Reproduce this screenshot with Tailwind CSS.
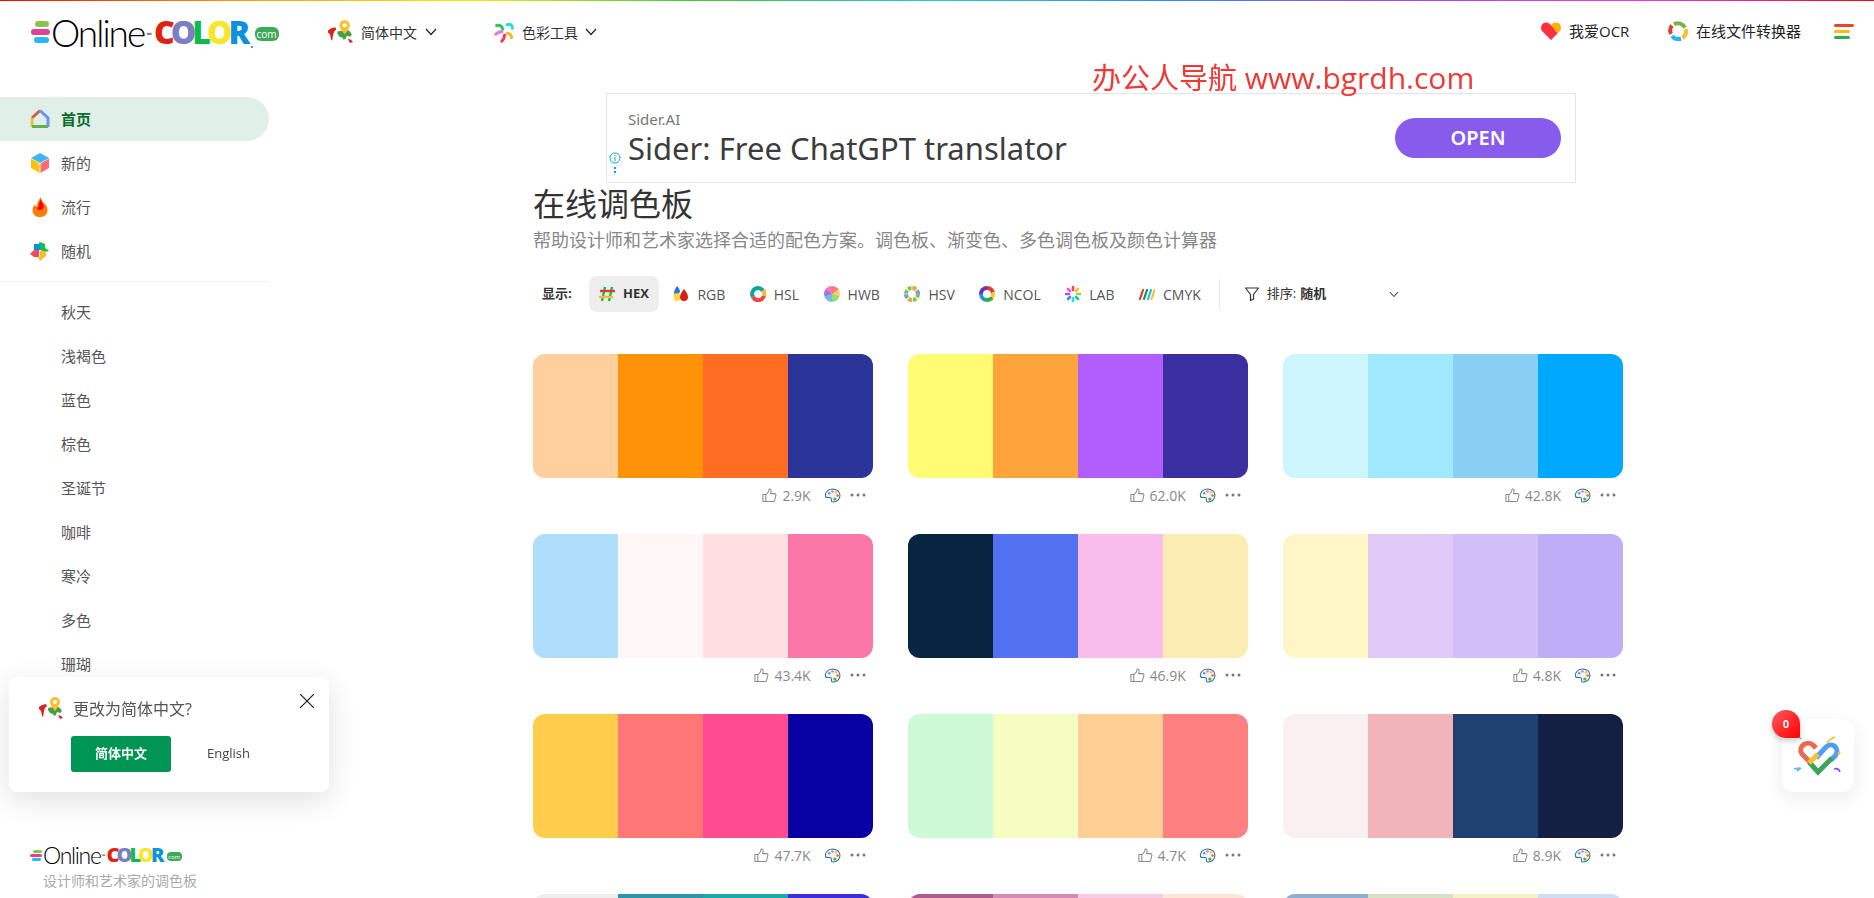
<!DOCTYPE html>
<html lang="zh-CN">
<head>
  <meta charset="UTF-8" />
  <meta name="viewport" content="width=device-width, initial-scale=1.0" />
  <title>在线调色板</title>
  <script src="https://cdn.jsdelivr.net/npm/@tailwindcss/browser@4"></script>
</head>
<body class="h-screen overflow-hidden bg-white text-[#555] font-['Open_Sans','Noto_Sans_CJK_SC',sans-serif]">
  <svg class="hidden" xmlns="http://www.w3.org/2000/svg">
    <symbol id="globe" viewBox="0 0 24 24">
      <path fill="#d9261c" d="M0 10l3-2 4-1 1 2-2 2-1 3-1 6-1-1-1-5-2-2zM19 18l3 1 2 2-3 1-1-2z"/>
      <path fill="#43a047" d="M9 11l5-1 2 1 2-2 3 2 2 3-2 2-3-1-1 3-2 1-1-2-3-1-2-3z"/>
      <path fill="#fbc02d" d="M16 0a5 5 0 0 1 5 5c0 3-3 6-5 9-2-3-5-6-5-9a5 5 0 0 1 5-5z"/>
      <circle cx="16" cy="5" r="2" fill="#fff"/>
    </symbol>
    <symbol id="thumb" viewBox="0 0 16 16">
      <path fill="none" stroke="#8a8a8a" stroke-width="1.100" stroke-linejoin="round" d="M1 7h3v7.500H1zM4 7.500l3-3.500.6-3c1.600-.3 2.400 1 2 3L9.200 6h4.300c1 0 1.600 1 1.300 1.900l-1.500 5.500c-.2.700-.8 1.100-1.500 1.100H6c-.8 0-1.300-.3-2-.6"/>
    </symbol>
    <symbol id="palette" viewBox="0 0 18 16">
      <path fill="#f4f4f4" stroke="#2c6e9e" stroke-width="1.100" d="M9 1c4.500 0 8 2.800 8 6.800 0 4.200-3.400 7.200-7 7.200-1.500 0-2.200-.8-2.200-1.800 0-1.400.6-2.400-.8-2.800C5 9.800 2.500 11 1.500 9.200.3 5.500 4 1 9 1z"/>
      <circle cx="5.500" cy="5.500" r="1.300" fill="#4aa3e8"/><circle cx="9" cy="3.600" r="1.300" fill="#f06bb0"/><circle cx="12.800" cy="4.600" r="1.300" fill="#f7c531"/><circle cx="14.500" cy="8" r="1.300" fill="#f0603c"/><circle cx="11.500" cy="11.800" r="1.800" fill="#57b947"/>
    </symbol>
    <symbol id="dots" viewBox="0 0 16 4">
      <circle cx="2" cy="2" r="1.500" fill="#777"/><circle cx="8" cy="2" r="1.500" fill="#777"/><circle cx="14" cy="2" r="1.500" fill="#777"/>
    </symbol>
    <symbol id="chev" viewBox="0 0 12 8">
      <path fill="none" stroke="#222" stroke-width="1.200" d="M1 1l5 5.500L11 1"/>
    </symbol>
  </svg>

  <div class="h-px bg-[linear-gradient(90deg,#f00,#f90,#ee0,#3c3,#2cc,#38f,#a4e,#f3d,#f01)]"></div>

  <header class="h-[62px] flex items-center text-[#333]">
    <a href="#" class="flex items-center w-[328px] pl-[31px]">
      <span class="flex flex-col gap-[2px] w-[19px] mr-px">
        <i class="block h-[6px] w-[14px] ml-[4px] rounded-full bg-[#8bc34a]"></i>
        <i class="block h-[6px] w-[19px] rounded-full bg-[#e0409a]"></i>
        <i class="block h-[6px] w-[15px] ml-[3px] rounded-full bg-[#29b6f6]"></i>
      </span>
      <span class="text-[37px] leading-none font-light text-black tracking-[-2px] font-['Lato',sans-serif]">Online</span>
      <span class="mx-[2px] text-[18px] font-bold text-[#888]">-</span>
      <span class="flex text-[32px] leading-none font-extrabold tracking-[-4px]">
        <span class="text-[#dd2412]">C</span><span class="text-[#7a7fc4]">O</span><span class="text-[#10bb4c]">L</span><span class="text-[#f7e72c]">O</span><span class="text-[#0c92dd]">R</span>
      </span>
      <span class="self-end mb-[1px] ml-[4px] text-[#0c92dd] font-bold text-[12px] leading-none">.</span>
      <span class="ml-px mt-[4px] w-[24px] h-[14px] flex items-center justify-center rounded-[6px] bg-[#3fa95a] text-white text-[10px] leading-none">com</span>
    </a>
    <button class="flex items-center w-[166px] text-[14px]">
      <svg class="w-[25px] h-[25px] mr-[8px]"><use href="#globe"/></svg>
      <span class="font-['Noto_Sans_CJK_SC',sans-serif]">简体中文</span>
      <svg class="w-[12px] h-[8px] ml-[8px]"><use href="#chev"/></svg>
    </button>
    <button class="flex items-center text-[14px]">
      <svg class="w-[21px] h-[21px] mr-[7px]" viewBox="0 0 24 24" fill="none" stroke-width="3.500" stroke-linecap="round">
        <path stroke="#1ecb5b" d="M3 4c3-1 6 0 7 4"/><path stroke="#32d6e8" d="M15 3c4-1 6 1 6 4"/><path stroke="#f7b731" d="M15 13c3 0 5 1 5 5"/><path stroke="#f36" d="M12 15c0 3-1 5-3 7"/><path stroke="#e874e0" d="M9 11c-3 0-5 1-7 3"/>
      </svg>
      <span class="font-['Noto_Sans_CJK_SC',sans-serif]">色彩工具</span>
      <svg class="w-[12px] h-[8px] ml-[7px]"><use href="#chev"/></svg>
    </button>
    <div class="ml-auto flex items-center pr-[20px] pb-[2px] text-[15px] text-[#222]">
      <svg class="w-[20px] h-[18px] mr-[8px]" viewBox="0 0 20 18">
        <path fill="#ff3040" d="M10 18L1.500 9.500C-.5 7.500-.4 3.800 1.500 1.900 3.500-.1 6.800-.1 8.800 1.900l1.200 1.300L14 8z"/>
        <path fill="#ffb300" d="M10 3.200l1.200-1.300c2-2 5.300-2 7.300 0 1.900 1.900 2 5.600 0 7.600l-2 2z"/>
        <path fill="#ff3040" d="M10 18l-4-8 4-6.800 6.500 8.300z"/>
      </svg>
      <span class="w-[61px] whitespace-nowrap">我爱OCR</span>
      <svg class="w-[20px] h-[20px] ml-[38px] mr-[8px]" viewBox="0 0 20 20" fill="none" stroke-width="4">
        <path stroke="#7cb342" d="M6 3.200a8 8 0 0 1 11 3.500"/><path stroke="#fbc02d" d="M17.500 8a8 8 0 0 1-3 9"/><path stroke="#29b6f6" d="M13 17.500a8 8 0 0 1-9-2.500"/><path stroke="#e53935" d="M3 13a8 8 0 0 1 1-8.500"/>
      </svg>
      <span class="w-[105px] whitespace-nowrap">在线文件转换器</span>
      <span class="ml-[33px] w-[20px] flex flex-col gap-[3px]">
        <i class="block h-[3px] w-[20px] rounded-full bg-[#ea4335]"></i>
        <i class="block h-[3px] w-[16px] rounded-full bg-[#fbbc05]"></i>
        <i class="block h-[3px] w-[16px] rounded-full bg-[#34a853]"></i>
      </span>
    </div>
  </header>

  <div class="flex h-[835px] overflow-hidden">
    <aside class="w-[269px] shrink-0 pt-[34px] flex flex-col text-[15px] leading-[44px]">
      <a href="#" class="flex items-center h-[44px] pl-[30px] rounded-r-full bg-[#e0f0e8] text-[#0d6b2e] font-bold">
        <svg class="w-[20px] h-[20px] mr-[11px]" viewBox="0 0 20 20" fill="none" stroke-width="3">
          <path stroke="#c9634a" d="M2 9l8-7.500"/><path stroke="#6d93f2" d="M10 1.500L18 9v9"/><path stroke="#e9c23f" d="M2 9v9"/><path stroke="#6aab55" d="M2 17.500h16"/>
        </svg>
        首页
      </a>
      <a href="#" class="flex items-center h-[44px] pl-[30px]">
        <svg class="w-[20px] h-[20px] mr-[11px]" viewBox="0 0 20 20">
          <path fill="#3db5f2" d="M10 0l9 5-9 5-9-5z"/><path fill="#ffc107" d="M1 5.500l8.500 5V20L1 15z"/><path fill="#ff6b70" d="M19 5.500l-8.500 5V20l8.500-5z"/>
        </svg>
        新的
      </a>
      <a href="#" class="flex items-center h-[44px] pl-[30px]">
        <svg class="w-[20px] h-[20px] mr-[11px]" viewBox="0 0 20 20">
          <path fill="#ff7a0a" d="M10 20c-4.500 0-7.500-3-7.500-6.800 0-2.500 1-4 2.500-5.700.4 1.500 1 2.200 2 2.500C6.800 6 8.500 3 11 0c0 3 1.500 4.500 3.500 6.500 2 2 3 4 3 6.700 0 3.800-3 6.800-7.500 6.800z"/>
          <path fill="#f00" d="M10 13c-2 0-3.200-1.300-3-3 .5.500 1 .7 1.500.7C8.300 8 9.500 5 11 2c.2 3 2.500 4.500 2.500 7.500 0 2-1.500 3.500-3.500 3.500z"/>
        </svg>
        流行
      </a>
      <a href="#" class="flex items-center h-[44px] pl-[30px]">
        <svg class="w-[20px] h-[20px] mr-[11px]" viewBox="0 0 20 20">
          <path fill="#0e90e0" d="M4 3h5l1-3 0 9-6 1z"/><path fill="#0cc14f" d="M10 1l5 2v4l4 2.500-3 1.500-6-2z"/><path fill="#f04b55" d="M4 9h5v7H4l-4-3z"/><path fill="#fdbb2d" d="M10 10h6v5l-6 5-2-4h2z"/>
        </svg>
        随机
      </a>
      <div class="my-[8px] h-px bg-[#eee]"></div>
      <a href="#" class="pl-[61px]">秋天</a>
      <a href="#" class="pl-[61px]">浅褐色</a>
      <a href="#" class="pl-[61px]">蓝色</a>
      <a href="#" class="pl-[61px]">棕色</a>
      <a href="#" class="pl-[61px]">圣诞节</a>
      <a href="#" class="pl-[61px]">咖啡</a>
      <a href="#" class="pl-[61px]">寒冷</a>
      <a href="#" class="pl-[61px]">多色</a>
      <a href="#" class="pl-[61px]">珊瑚</a>
      <div class="mt-auto pb-[7px] pl-[30px]">
        <div class="flex items-center h-[20px]">
          <span class="flex flex-col gap-px w-[12px] mr-px">
            <i class="block h-[3px] w-[9px] ml-[3px] rounded-full bg-[#8bc34a]"></i>
            <i class="block h-[3px] w-[12px] rounded-full bg-[#e0409a]"></i>
            <i class="block h-[3px] w-[9px] ml-[2px] rounded-full bg-[#29b6f6]"></i>
          </span>
          <span class="text-[23px] leading-none font-light text-black tracking-[-1.300px] font-['Lato',sans-serif]">Online</span>
          <span class="mx-px text-[12px] font-bold text-[#888] leading-none">-</span>
          <span class="flex text-[20px] leading-none font-extrabold tracking-[-3px]">
            <span class="text-[#dd2412]">C</span><span class="text-[#7a7fc4]">O</span><span class="text-[#10bb4c]">L</span><span class="text-[#f7e72c]">O</span><span class="text-[#0c92dd]">R</span>
          </span>
          <span class="ml-[5px] mt-[3px] w-[15px] h-[9px] flex items-center justify-center rounded-[4px] bg-[#3fa95a] text-white text-[6px] leading-none">com</span>
        </div>
        <p class="pl-[13px] mt-[6px] text-[14px] leading-[20px] text-[#aaa]">设计师和艺术家的调色板</p>
      </div>
    </aside>

    <main class="pl-[264px] w-[1354px] pt-[30px] overflow-hidden">
      <a href="#" class="relative ml-[73px] w-[970px] h-[90px] border border-[#e5e5e5] flex items-center justify-between pl-[21px] pr-[14px]">
        <div class="font-['Noto_Sans',sans-serif]">
          <p class="text-[15px] leading-[20px] text-[#777]">Sider.AI</p>
          <p class="text-[31px] leading-[38px] text-[#3c3c3c]">Sider: Free ChatGPT translator</p>
        </div>
        <span class="w-[166px] h-[40px] rounded-full bg-[#875bec] text-white text-[20px] font-semibold flex items-center justify-center font-['Noto_Sans',sans-serif]">OPEN</span>
        <svg class="absolute left-[2px] top-[58px] w-[12px] h-[26px]" viewBox="0 0 12 26" fill="none" stroke="#00aecd">
          <circle cx="6" cy="6" r="5"/><path d="M6 5v4M6 3v1"/>
          <path stroke-width="2" stroke-dasharray="2 2" d="M6 15v8"/>
        </svg>
      </a>

      <h1 class="mt-px text-[32px] leading-[40px] text-[#333] font-normal">在线调色板</h1>
      <p class="mt-[4px] text-[18px] leading-[24px] text-[#888]">帮助设计师和艺术家选择合适的配色方案。调色板、渐变色、多色调色板及颜色计算器</p>

      <div class="mt-[24px] flex items-center h-[36px] text-[14px]">
        <span class="ml-[9px] w-[47px] text-[13px] font-bold text-[#333]">显示:</span>
        <div class="flex items-center gap-[4.500px]">
          <button class="flex items-center gap-[8px] h-[36px] px-[10px] rounded-lg bg-[#eee] text-[13px] font-bold text-[#333]">
            <svg class="w-[16px] h-[16px]" viewBox="0 0 16 16" fill="none" stroke-width="2.400">
              <path stroke="#0cc14f" d="M6 1L3 15M13 1l-3 14"/><path stroke="#e53935" d="M1 5h15"/><path stroke="#fbc02d" d="M0 11h14"/>
            </svg>
            HEX
          </button>
          <button class="flex items-center gap-[8px] h-[36px] px-[10px]">
            <svg class="w-[16px] h-[16px]" viewBox="0 0 16 16">
              <path fill="#2f6fe4" d="M4 0c2 2 3 4 3 6l-3 3-3-1c0-3 1-5 3-8z"/><path fill="#fdd835" d="M1 8c2-1 5-1 6 1 1 3 0 6-3 6S0 12 1 8z"/><path fill="#d9200f" d="M11 3c2 3 4 5 4 8a4 4 0 0 1-8 0c0-3 2-5 4-8z"/>
            </svg>
            RGB
          </button>
          <button class="flex items-center gap-[8px] h-[36px] px-[10px]">
            <svg class="w-[16px] h-[16px]" viewBox="0 0 16 16" fill="none" stroke-width="4">
              <path stroke="#0aa89a" d="M3 11A6 6 0 0 1 8 2a6 6 0 0 1 5 3"/><path stroke="#f7b731" d="M13 4a6 6 0 0 1 1 6"/><path stroke="#f0453a" d="M14 10a6 6 0 0 1-11 1"/>
            </svg>
            HSL
          </button>
          <button class="flex items-center gap-[8px] h-[36px] px-[10px]">
            <span class="w-[16px] h-[16px] rounded-full bg-[conic-gradient(#f77_0_15%,#fc6_15%_30%,#9d7_30%_50%,#7bd_50%_70%,#97e_70%_85%,#f7a_85%)]"></span>
            HWB
          </button>
          <button class="flex items-center gap-[8px] h-[36px] px-[10px]">
            <svg class="w-[16px] h-[16px]" viewBox="0 0 16 16" fill="none" stroke-width="4" stroke-dasharray="3.500 1.200">
              <circle cx="8" cy="8" r="6" stroke="#7ac74f"/><circle cx="8" cy="8" r="6" stroke="#f9a03f" stroke-dashoffset="9.400" stroke-dasharray="3.500 15.300"/><circle cx="8" cy="8" r="6" stroke="#7a9cf4" stroke-dashoffset="23" stroke-dasharray="3.500 15.300"/>
            </svg>
            HSV
          </button>
          <button class="flex items-center gap-[8px] h-[36px] px-[10px]">
            <span class="w-[16px] h-[16px] rounded-full flex items-center justify-center bg-[conic-gradient(#e33_0_20%,#ec3_20%_35%,#3a4_35%_55%,#29d_55%_75%,#63b_75%)]"><span class="w-[8px] h-[8px] rounded-full bg-white"></span></span>
            NCOL
          </button>
          <button class="flex items-center gap-[8px] h-[36px] px-[10px]">
            <svg class="w-[16px] h-[16px]" viewBox="0 0 16 16" fill="none" stroke-width="2.600" stroke-linecap="round">
              <path stroke="#f44" d="M8 1v3"/><path stroke="#fb3" d="M13 3l-2 2"/><path stroke="#8d4" d="M15 8h-3"/><path stroke="#2c8" d="M13 13l-2-2"/><path stroke="#2de" d="M8 15v-3"/><path stroke="#48f" d="M3 13l2-2"/><path stroke="#a5e" d="M1 8h3"/><path stroke="#f5c" d="M3 3l2 2"/>
            </svg>
            LAB
          </button>
          <button class="flex items-center gap-[8px] h-[36px] px-[10px]">
            <svg class="w-[16px] h-[16px]" viewBox="0 0 16 16" fill="none" stroke-width="2.200" stroke-linecap="round">
              <path stroke="#e53935" d="M1 13l3-9"/><path stroke="#0a9b4f" d="M5 13l3-9"/><path stroke="#29b6f6" d="M9 13l3-9"/><path stroke="#fbc02d" d="M12.500 13l3-9"/>
            </svg>
            CMYK
          </button>
        </div>
        <span class="ml-[8px] w-px h-[30px] bg-[#e8e8e8]"></span>
        <button class="ml-[24px] w-[155px] flex items-center text-[13px] text-[#333]">
          <svg class="w-[16px] h-[16px] mr-[7px]" viewBox="0 0 16 16" fill="none" stroke="#333" stroke-width="1.200" stroke-linejoin="round"><path d="M1.500 2h13L9.500 8.500V13l-3 1.500v-6z"/></svg>
          排序: <b class="ml-[4px]">随机</b>
          <svg class="ml-auto w-[10px] h-[7px]"><use href="#chev"/></svg>
        </button>
      </div>

      <div class="mt-[42px] grid grid-cols-3 gap-x-[35.5px] w-[1090px]">
        <div>
          <div class="flex h-[124px] rounded-xl overflow-hidden"><span class="flex-1 bg-[#FFCF9D]"></span><span class="flex-1 bg-[#FF9209]"></span><span class="flex-1 bg-[#FF6C22]"></span><span class="flex-1 bg-[#2B3499]"></span></div>
          <div class="h-[34px] mb-[22px] pr-[7px] flex items-center justify-end text-[14px] text-[#888]"><svg class="w-[15px] h-[15px] mr-[5px]"><use href="#thumb"/></svg>2.9K<svg class="w-[17px] h-[15px] ml-[13px] mr-[9px]"><use href="#palette"/></svg><svg class="w-[16px] h-[4px]"><use href="#dots"/></svg></div>
        </div>
        <div>
          <div class="flex h-[124px] rounded-xl overflow-hidden"><span class="flex-1 bg-[#FFFB73]"></span><span class="flex-1 bg-[#FFA33C]"></span><span class="flex-1 bg-[#B15EFF]"></span><span class="flex-1 bg-[#3B2EA0]"></span></div>
          <div class="h-[34px] mb-[22px] pr-[7px] flex items-center justify-end text-[14px] text-[#888]"><svg class="w-[15px] h-[15px] mr-[5px]"><use href="#thumb"/></svg>62.0K<svg class="w-[17px] h-[15px] ml-[13px] mr-[9px]"><use href="#palette"/></svg><svg class="w-[16px] h-[4px]"><use href="#dots"/></svg></div>
        </div>
        <div>
          <div class="flex h-[124px] rounded-xl overflow-hidden"><span class="flex-1 bg-[#CDF5FD]"></span><span class="flex-1 bg-[#A0E9FF]"></span><span class="flex-1 bg-[#89CFF3]"></span><span class="flex-1 bg-[#00A9FF]"></span></div>
          <div class="h-[34px] mb-[22px] pr-[7px] flex items-center justify-end text-[14px] text-[#888]"><svg class="w-[15px] h-[15px] mr-[5px]"><use href="#thumb"/></svg>42.8K<svg class="w-[17px] h-[15px] ml-[13px] mr-[9px]"><use href="#palette"/></svg><svg class="w-[16px] h-[4px]"><use href="#dots"/></svg></div>
        </div>
        <div>
          <div class="flex h-[124px] rounded-xl overflow-hidden"><span class="flex-1 bg-[#AEDEFC]"></span><span class="flex-1 bg-[#FFF6F6]"></span><span class="flex-1 bg-[#FFDFDF]"></span><span class="flex-1 bg-[#FB77A8]"></span></div>
          <div class="h-[34px] mb-[22px] pr-[7px] flex items-center justify-end text-[14px] text-[#888]"><svg class="w-[15px] h-[15px] mr-[5px]"><use href="#thumb"/></svg>43.4K<svg class="w-[17px] h-[15px] ml-[13px] mr-[9px]"><use href="#palette"/></svg><svg class="w-[16px] h-[4px]"><use href="#dots"/></svg></div>
        </div>
        <div>
          <div class="flex h-[124px] rounded-xl overflow-hidden"><span class="flex-1 bg-[#072541]"></span><span class="flex-1 bg-[#5272F2]"></span><span class="flex-1 bg-[#F8BDEB]"></span><span class="flex-1 bg-[#FBECB2]"></span></div>
          <div class="h-[34px] mb-[22px] pr-[7px] flex items-center justify-end text-[14px] text-[#888]"><svg class="w-[15px] h-[15px] mr-[5px]"><use href="#thumb"/></svg>46.9K<svg class="w-[17px] h-[15px] ml-[13px] mr-[9px]"><use href="#palette"/></svg><svg class="w-[16px] h-[4px]"><use href="#dots"/></svg></div>
        </div>
        <div>
          <div class="flex h-[124px] rounded-xl overflow-hidden"><span class="flex-1 bg-[#FFF6C8]"></span><span class="flex-1 bg-[#DFCAF8]"></span><span class="flex-1 bg-[#D2BFF8]"></span><span class="flex-1 bg-[#BFADF8]"></span></div>
          <div class="h-[34px] mb-[22px] pr-[7px] flex items-center justify-end text-[14px] text-[#888]"><svg class="w-[15px] h-[15px] mr-[5px]"><use href="#thumb"/></svg>4.8K<svg class="w-[17px] h-[15px] ml-[13px] mr-[9px]"><use href="#palette"/></svg><svg class="w-[16px] h-[4px]"><use href="#dots"/></svg></div>
        </div>
        <div>
          <div class="flex h-[124px] rounded-xl overflow-hidden"><span class="flex-1 bg-[#FFCD4B]"></span><span class="flex-1 bg-[#FF7676]"></span><span class="flex-1 bg-[#FF4B91]"></span><span class="flex-1 bg-[#0802A3]"></span></div>
          <div class="h-[34px] mb-[22px] pr-[7px] flex items-center justify-end text-[14px] text-[#888]"><svg class="w-[15px] h-[15px] mr-[5px]"><use href="#thumb"/></svg>47.7K<svg class="w-[17px] h-[15px] ml-[13px] mr-[9px]"><use href="#palette"/></svg><svg class="w-[16px] h-[4px]"><use href="#dots"/></svg></div>
        </div>
        <div>
          <div class="flex h-[124px] rounded-xl overflow-hidden"><span class="flex-1 bg-[#CDFAD5]"></span><span class="flex-1 bg-[#F6FDC3]"></span><span class="flex-1 bg-[#FFCF96]"></span><span class="flex-1 bg-[#FF8080]"></span></div>
          <div class="h-[34px] mb-[22px] pr-[7px] flex items-center justify-end text-[14px] text-[#888]"><svg class="w-[15px] h-[15px] mr-[5px]"><use href="#thumb"/></svg>4.7K<svg class="w-[17px] h-[15px] ml-[13px] mr-[9px]"><use href="#palette"/></svg><svg class="w-[16px] h-[4px]"><use href="#dots"/></svg></div>
        </div>
        <div>
          <div class="flex h-[124px] rounded-xl overflow-hidden"><span class="flex-1 bg-[#FBF0F0]"></span><span class="flex-1 bg-[#F1B4BB]"></span><span class="flex-1 bg-[#1F4172]"></span><span class="flex-1 bg-[#132043]"></span></div>
          <div class="h-[34px] mb-[22px] pr-[7px] flex items-center justify-end text-[14px] text-[#888]"><svg class="w-[15px] h-[15px] mr-[5px]"><use href="#thumb"/></svg>8.9K<svg class="w-[17px] h-[15px] ml-[13px] mr-[9px]"><use href="#palette"/></svg><svg class="w-[16px] h-[4px]"><use href="#dots"/></svg></div>
        </div>
        <div class="flex h-[124px] rounded-xl overflow-hidden"><span class="flex-1 bg-[#EEEEEE]"></span><span class="flex-1 bg-[#2D95A5]"></span><span class="flex-1 bg-[#1AA9A5]"></span><span class="flex-1 bg-[#3A2FD8]"></span></div>
        <div class="flex h-[124px] rounded-xl overflow-hidden"><span class="flex-1 bg-[#AE5A8C]"></span><span class="flex-1 bg-[#D689B5]"></span><span class="flex-1 bg-[#F9CBE8]"></span><span class="flex-1 bg-[#FDE5D6]"></span></div>
        <div class="flex h-[124px] rounded-xl overflow-hidden"><span class="flex-1 bg-[#8FADCE]"></span><span class="flex-1 bg-[#D4E2C6]"></span><span class="flex-1 bg-[#F6F0C4]"></span><span class="flex-1 bg-[#CFDDF5]"></span></div>
      </div>
    </main>
  </div>

  <!-- screenshot watermark -->
  <div class="fixed left-[1092px] top-[58px] text-[30px] leading-[40px] text-[#f33733]"><span class="text-[29px]">办公人导航</span> www.bgrdh.com</div>

  <!-- language popup -->
  <div class="fixed left-[9px] top-[677px] w-[320px] h-[115px] rounded-lg bg-white shadow-[0_8px_30px_rgba(0,0,0,0.12)] pl-[30px] pt-[19px]">
    <div class="flex items-center h-[26px]">
      <svg class="w-[24px] h-[24px] mr-[10px]"><use href="#globe"/></svg>
      <span class="text-[16px] text-[#555]">更改为简体中文?</span>
    </div>
    <div class="mt-[14px] ml-[32px] flex items-center">
      <button class="w-[100px] h-[36px] rounded-[3px] bg-[#009552] text-white text-[13px] font-semibold">简体中文</button>
      <span class="ml-[36px] text-[13px] text-[#444]">English</span>
    </div>
    <svg class="absolute right-[15px] top-[17px] w-[14px] h-[14px]" viewBox="0 0 14 14" stroke="#111" stroke-width="1.100"><path d="M0 0l14 14M14 0L0 14"/></svg>
  </div>

  <!-- favourites widget -->
  <div class="fixed left-[1782px] top-[719px] w-[72px] h-[73px] rounded-xl bg-white shadow-[0_6px_20px_rgba(0,0,0,0.08)] flex items-center justify-center">
    <svg class="w-[50px] h-[44px] mt-[3px]" viewBox="0 0 50 44" fill="none">
      <path stroke="#ea6a4f" stroke-width="5" d="M17 27L9 19c-5-8 6-14 11-9l3 3"/>
      <path stroke="#4f9cf9" stroke-width="5" d="M23 23l10-11c6-6 15 2 9 9l-4 4"/>
      <path stroke="#3ba55d" stroke-width="5" d="M16 27l9 10 14-14"/>
      <path stroke="#fbc02d" stroke-width="5" d="M16 28l9-9"/>
      <path stroke="#fbc02d" stroke-width="1.500" d="M34 8c2-3 5-5 8-6"/>
      <circle cx="46" cy="18" r="1.500" fill="#fbc02d"/>
      <path stroke="#64b5f6" stroke-width="1.500" d="M1 34l5-1-2 3 4-3"/>
      <path stroke="#7c4dff" stroke-width="1.500" d="M41 34c3-1 5 0 6 3"/>
      <path stroke="#3dd6b0" stroke-width="1.500" d="M5 1l3 3"/>
    </svg>
  </div>
  <div class="fixed left-[1772px] top-[710px] w-[28px] h-[28px] rounded-[14px_14px_2px_14px] bg-[linear-gradient(135deg,#ff5a5f,#f00)] text-white text-[11px] font-bold flex items-center justify-center shadow-[0_3px_6px_rgba(0,0,0,0.2)]">0</div>
</body>
</html>
